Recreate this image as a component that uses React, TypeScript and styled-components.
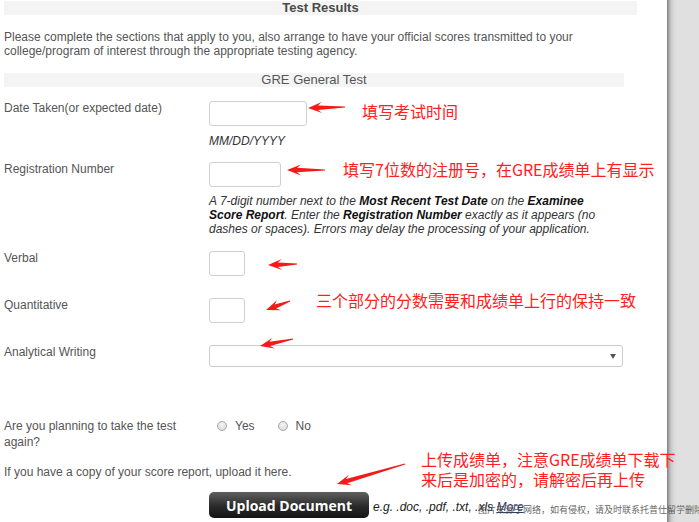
import React from "react";
import styled, { createGlobalStyle } from "styled-components";

const Global = createGlobalStyle`
  html, body { margin: 0; padding: 0; background: #fff; }
  body { font-family: "Liberation Sans", Arial, sans-serif; font-size: 12px; color: #555; }
  * { box-sizing: border-box; }
`;

const Page = styled.div`
  position: relative;
  display: flex;
  width: 699px;
  height: 522px;
  overflow: hidden;
`;

const Main = styled.div`
  width: 667px;
  flex: none;
  background: #fff;
  padding: 1px 0 0 4px;
`;

const Gutter = styled.div`
  flex: 1;
  background: linear-gradient(to right, #7c7c7c 0px, #a9a9a9 2px, #c9c9c9 4px, #d9d9d9 7px, #e0e0e0 10px);
`;

const Band = styled.div<{ $w: number; $bold?: boolean }>`
  width: ${(p) => p.$w}px;
  height: 14px;
  line-height: 14px;
  background: #f4f4f4;
  text-align: center;
  font-size: 13px;
  font-weight: ${(p) => (p.$bold ? 700 : 400)};
  color: ${(p) => (p.$bold ? "#4a4a4a" : "#555")};
`;

const Intro = styled.p`
  margin: 15px 0 15px;
  line-height: 14px;
  width: 600px;
  color: #555;
`;

const Row = styled.div<{ $mt: number }>`
  display: grid;
  grid-template-columns: 205px 1fr;
  margin-top: ${(p) => p.$mt}px;
`;

const Label = styled.div<{ $lh?: number }>`
  line-height: ${(p) => p.$lh ?? 14}px;
  color: #555;
  padding-right: 18px;
`;

const Field = styled.div`
  display: flex;
  flex-direction: column;
  align-items: flex-start;
`;

const TextInput = styled.input<{ $w: number }>`
  width: ${(p) => p.$w}px;
  height: 25px;
  border: 1px solid #cfcfcf;
  border-radius: 3px;
  background: #fff;
  margin: 0;
  padding: 0 4px;
  outline: none;
`;

const Hint = styled.div<{ $mt: number }>`
  margin-top: ${(p) => p.$mt}px;
  font-style: italic;
  line-height: 14px;
  color: #333;
  width: 395px;
  b { color: #111; }
`;

const Select = styled.div`
  position: relative;
  width: 414px;
  height: 22px;
  border: 1px solid #cdcdcd;
  border-radius: 3px;
  background: #fff;
`;

const Caret = styled.span`
  position: absolute;
  right: 6px;
  top: 8px;
  width: 0;
  height: 0;
  border-left: 3px solid transparent;
  border-right: 3px solid transparent;
  border-top: 5px solid #555;
`;

const Radios = styled.div`
  display: flex;
  align-items: center;
  gap: 23px;
  padding-left: 8px;
  line-height: 16px;
`;

const RadioOption = styled.label`
  display: flex;
  align-items: center;
  gap: 8px;
  color: #555;
`;

const RadioDot = styled.span`
  width: 10px;
  height: 10px;
  border-radius: 50%;
  border: 1px solid #a8a8a8;
  background: radial-gradient(circle at 50% 35%, #f4f4f4, #d6d6d6);
`;

const Note = styled.div`
  margin-top: 15px;
  line-height: 14px;
  color: #555;
`;

const UploadLine = styled.div`
  display: flex;
  align-items: center;
  gap: 4px;
`;

const UploadButton = styled.button`
  width: 160px;
  height: 26px;
  border: none;
  border-radius: 5px;
  background: linear-gradient(#606060, #2a2a2a 55%, #141414);
  color: #fff;
  font-family: "Open Sans", sans-serif;
  font-weight: 700;
  font-size: 14px;
  padding: 0;
`;

const Formats = styled.span`
  font-style: italic;
  color: #222;
  margin-top: 4px;
  a { color: #2a3f6a; text-decoration: underline; }
`;

const Overlay = styled.svg`
  position: absolute;
  left: 0;
  top: 0;
  pointer-events: none;
`;

const RedNote = styled.div<{ $x: number; $y: number }>`
  position: absolute;
  left: ${(p) => p.$x}px;
  top: ${(p) => p.$y}px;
  font-family: "Noto Sans CJK SC", sans-serif;
  font-size: 16px;
  line-height: 20px;
  color: #ff2020;
  white-space: nowrap;
`;

const Watermark = styled.div`
  position: absolute;
  left: 478px;
  top: 504px;
  font-family: "Noto Sans CJK SC", sans-serif;
  font-size: 9px;
  line-height: 12px;
  color: rgba(70, 70, 70, 0.85);
  white-space: nowrap;
`;

type Pt = [number, number];

function arrowPoints(tip: Pt, tail: Pt): string {
  const dx = tip[0] - tail[0];
  const dy = tip[1] - tail[1];
  const len = Math.hypot(dx, dy);
  const d: Pt = [dx / len, dy / len];
  const n: Pt = [-d[1], d[0]];
  const h = 14;
  const w = 5.5;
  const at = (along: number, side: number): string =>
    `${(tip[0] - d[0] * along + n[0] * side).toFixed(1)},${(tip[1] - d[1] * along + n[1] * side).toFixed(1)}`;
  return [
    at(len, 0.6),
    at(h - 4, 2.2),
    at(h, w),
    at(0, 0),
    at(h, -w),
    at(h - 4, -2.2),
    at(len, -0.6),
  ].join(" ");
}

const arrows: [Pt, Pt][] = [
  [[308, 108], [345, 107]],
  [[287, 170], [325, 170]],
  [[268, 265], [297, 264]],
  [[266, 310], [290, 301]],
  [[260, 346], [293, 339]],
  [[337, 484], [405, 464]],
];

export default function App() {
  return (
    <>
      <Global />
      <Page>
        <Main>
          <Band $w={633} $bold>Test Results</Band>
          <Intro>
            Please complete the sections that apply to you, also arrange to have your official scores transmitted to your
            college/program of interest through the appropriate testing agency.
          </Intro>
          <Band $w={620}>GRE General Test</Band>

          <Row $mt={14}>
            <Label>Date Taken(or expected date)</Label>
            <Field>
              <TextInput $w={98} />
              <Hint $mt={8}>MM/DD/YYYY</Hint>
            </Field>
          </Row>

          <Row $mt={14}>
            <Label>Registration Number</Label>
            <Field>
              <TextInput $w={72} />
              <Hint $mt={7}>
                A 7-digit number next to the <b>Most Recent Test Date</b> on the <b>Examinee Score Report</b>. Enter the{" "}
                <b>Registration Number</b> exactly as it appears (no dashes or spaces). Errors may delay the processing of
                your application.
              </Hint>
            </Field>
          </Row>

          <Row $mt={15}>
            <Label>Verbal</Label>
            <Field>
              <TextInput $w={36} />
            </Field>
          </Row>

          <Row $mt={22}>
            <Label>Quantitative</Label>
            <Field>
              <TextInput $w={36} />
            </Field>
          </Row>

          <Row $mt={22}>
            <Label>Analytical Writing</Label>
            <Field>
              <Select>
                <Caret />
              </Select>
            </Field>
          </Row>

          <Row $mt={51}>
            <Label $lh={16}>Are you planning to take the test again?</Label>
            <Field>
              <Radios>
                <RadioOption>
                  <RadioDot />
                  Yes
                </RadioOption>
                <RadioOption>
                  <RadioDot />
                  No
                </RadioOption>
              </Radios>
            </Field>
          </Row>

          <Note>If you have a copy of your score report, upload it here.</Note>

          <Row $mt={13}>
            <Label />
            <Field>
              <UploadLine>
                <UploadButton>Upload Document</UploadButton>
                <Formats>
                  e.g. .doc, .pdf, .txt, .xls <a>More</a>
                </Formats>
              </UploadLine>
            </Field>
          </Row>
        </Main>
        <Gutter />

        <Overlay width={699} height={522} viewBox="0 0 699 522">
          {arrows.map(([tip, tail], i) => (
            <polygon key={i} points={arrowPoints(tip, tail)} fill="#f51a1a" />
          ))}
        </Overlay>
        <RedNote $x={362} $y={101}>填写考试时间</RedNote>
        <RedNote $x={343} $y={159}>填写7位数的注册号，在GRE成绩单上有显示</RedNote>
        <RedNote $x={316} $y={290}>三个部分的分数需要和成绩单上行的保持一致</RedNote>
        <RedNote $x={421} $y={449}>
          上传成绩单，注意GRE成绩单下载下
          <br />
          来后是加密的，请解密后再上传
        </RedNote>
        <Watermark>图片来源于网络，如有侵权，请及时联系托普仕留学删除</Watermark>
      </Page>
    </>
  );
}
